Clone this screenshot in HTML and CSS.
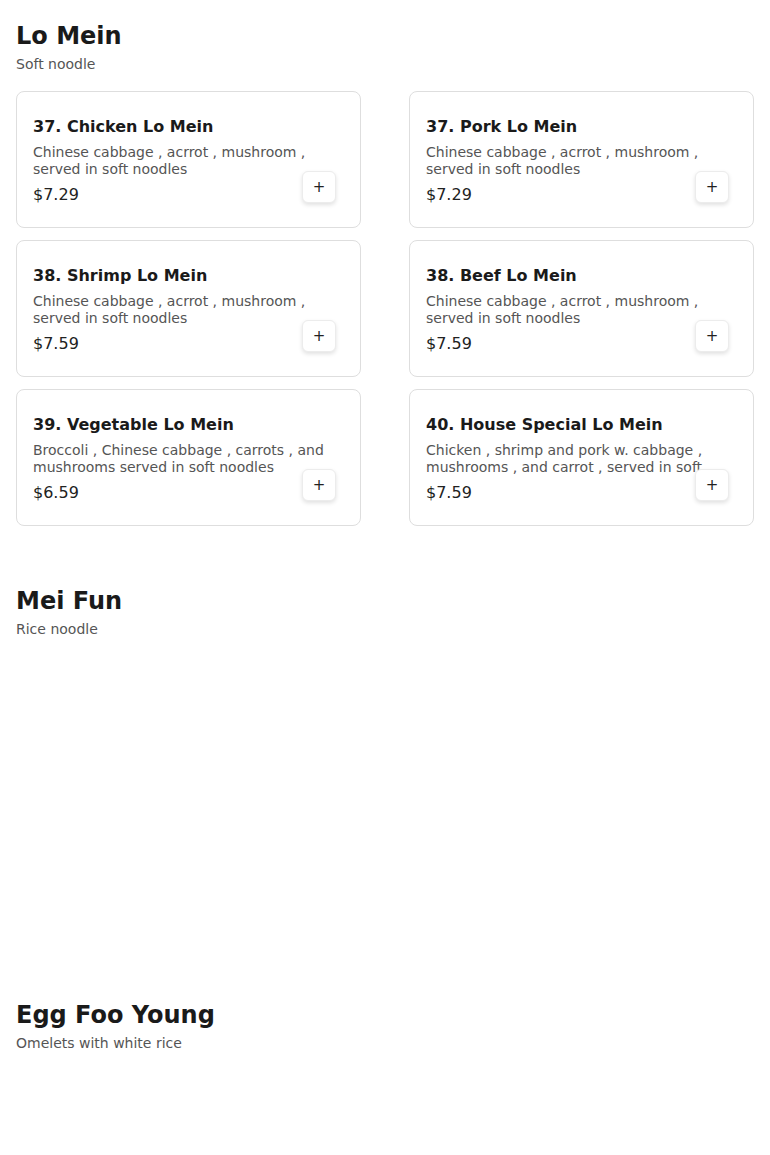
FILE: index.html
```html
<!DOCTYPE html>
<html lang="en">
<head>
    <meta charset="UTF-8">
    <meta name="viewport" content="width=device-width, initial-scale=1.0">
    <title>Menu</title>
    <link rel="stylesheet" href="styles.css">
</head>
<body>
    <div class="menu">
        <section class="category">
            <h2>Lo Mein</h2>
            <p class="category-note">Soft noodle</p>
            <div class="items">
                <div class="item">
                    <h3>37. Chicken Lo Mein</h3>
                    <p class="desc">Chinese cabbage , acrrot , mushroom , served in soft noodles</p>
                    <div class="price">$7.29</div>
                    <button class="add">+</button>
                </div>
                <div class="item">
                    <h3>37. Pork Lo Mein</h3>
                    <p class="desc">Chinese cabbage , acrrot , mushroom , served in soft noodles</p>
                    <div class="price">$7.29</div>
                    <button class="add">+</button>
                </div>
                <div class="item">
                    <h3>38. Shrimp Lo Mein</h3>
                    <p class="desc">Chinese cabbage , acrrot , mushroom , served in soft noodles</p>
                    <div class="price">$7.59</div>
                    <button class="add">+</button>
                </div>
                <div class="item">
                    <h3>38. Beef Lo Mein</h3>
                    <p class="desc">Chinese cabbage , acrrot , mushroom , served in soft noodles</p>
                    <div class="price">$7.59</div>
                    <button class="add">+</button>
                </div>
                <div class="item">
                    <h3>39. Vegetable Lo Mein</h3>
                    <p class="desc">Broccoli , Chinese cabbage , carrots , and mushrooms served in soft noodles</p>
                    <div class="price">$6.59</div>
                    <button class="add">+</button>
                </div>
                <div class="item">
                    <h3>40. House Special Lo Mein</h3>
                    <p class="desc">Chicken , shrimp and pork w. cabbage , mushrooms , and carrot , served in soft noodles</p>
                    <div class="price">$7.59</div>
                    <button class="add">+</button>
                </div>
            </div>
        </section>

        <section class="category">
            <h2>Mei Fun</h2>
            <p class="category-note">Rice noodle</p>
            <div class="items empty"></div>
        </section>

        <section class="category">
            <h2>Egg Foo Young</h2>
            <p class="category-note">Omelets with white rice</p>
            <div class="items empty last"></div>
        </section>
    </div>
</body>
</html>
```

FILE: styles.css
```css
body {
    margin: 0;
    font-family: "DejaVu Sans", Verdana, sans-serif;
    color: #1a1a1a;
    background-color: #fff;
}
.menu {
    padding: 22px 16px 0;
}
.category {
    margin-bottom: 61px;
}
.category h2 {
    margin: 0;
    font-size: 24px;
    line-height: 29px;
    font-weight: bold;
}
.category-note {
    margin: 5px 0 0;
    font-size: 14px;
    line-height: 17px;
    color: #555;
}
.items {
    display: grid;
    grid-template-columns: 1fr 1fr;
    column-gap: 48px;
    row-gap: 12px;
    margin-top: 18px;
}
.items.empty {
    min-height: 284px;
}
.items.empty.last {
    min-height: 40px;
}
.item {
    position: relative;
    border: 1px solid #dedede;
    border-radius: 8px;
    padding: 25px 16px 22px;
}
.item h3 {
    margin: 0;
    font-size: 16px;
    line-height: 20px;
    font-weight: bold;
}
.desc {
    margin: 7px 0 0;
    font-size: 14px;
    line-height: 17px;
    color: #555;
    height: 34px;
    overflow: hidden;
}
.price {
    margin-top: 7px;
    font-size: 16px;
    line-height: 20px;
    color: #222;
}
.add {
    position: absolute;
    right: 24px;
    bottom: 24px;
    width: 34px;
    height: 32px;
    padding: 0;
    background-color: #fff;
    border: 1px solid #ececec;
    border-radius: 6px;
    box-shadow: 0 2px 4px rgba(0, 0, 0, 0.12);
    font-family: "DejaVu Sans", sans-serif;
    font-size: 15px;
    color: #222;
    cursor: pointer;
}
```
